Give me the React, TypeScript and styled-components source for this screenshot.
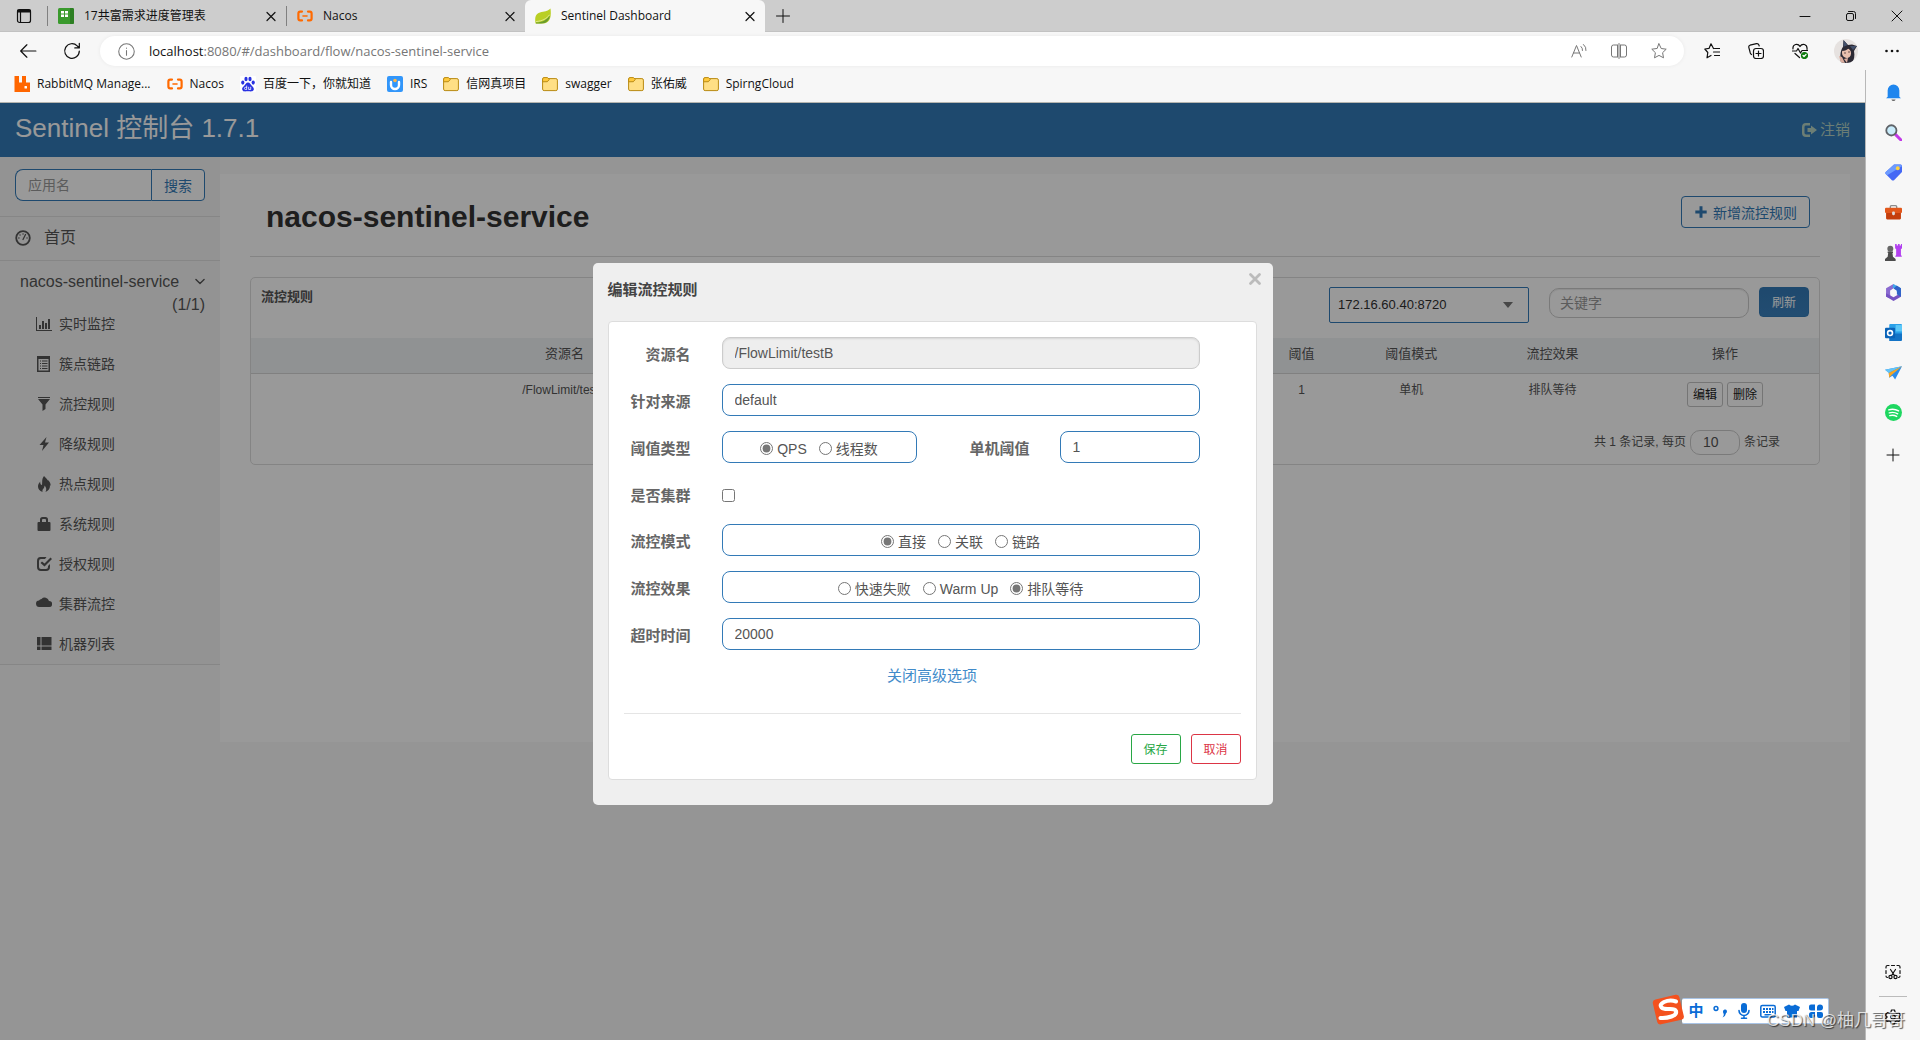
import React from "react";
import styled, { createGlobalStyle } from "styled-components";

const uiFont = '"Open Sans", "Noto Sans CJK SC", sans-serif';
const pageFont = '"Liberation Sans", "Noto Sans CJK SC", sans-serif';
const blue = "#337ab7";

const GlobalStyle = createGlobalStyle`
  *, *::before, *::after { box-sizing: border-box; }
  body { margin: 0; overflow: hidden; background: #f7f7f7; }
  button, input, select { font-family: inherit; margin: 0; }
  h1, h2, p { margin: 0; }
`;

/* ---------- browser frame ---------- */

const Browser = styled.div`
  position: relative;
  display: flex;
  flex-direction: column;
  height: 100vh;
  font: 12px/16px ${uiFont};
  color: #111;
  background: #f7f7f7;
`;

const TabBar = styled.header`
  display: flex;
  align-items: center;
  height: 32px;
  background: #cdcdcd;
  border-bottom: 1px solid #c2c2c2;
`;

const PlainButton = styled.button`
  display: flex;
  align-items: center;
  justify-content: center;
  flex: none;
  padding: 0;
  border: 0;
  background: none;
  color: inherit;
  font-size: inherit;
  line-height: inherit;
`;

const TabMenuButton = styled(PlainButton)`
  width: 47px;
  height: 32px;
`;

const Tab = styled.div<{ $active?: boolean }>`
  display: flex;
  align-items: center;
  gap: 10px;
  width: ${(p) => (p.$active ? "240px" : "238px")};
  height: 32px;
  padding: 0 7px 0 10px;
  border-radius: 6px 6px 0 0;
  background: ${(p) => (p.$active ? "#f7f7f7" : "transparent")};
`;

const TabTitle = styled.span`
  flex: 1;
  white-space: nowrap;
`;

const TabDivider = styled.span`
  width: 1px;
  height: 20px;
  background: #808080;
`;

const NewTabButton = styled(PlainButton)`
  width: 36px;
  height: 32px;
`;

const WindowControls = styled.div`
  display: flex;
  margin-left: auto;
`;

const WindowButton = styled(PlainButton)`
  width: 46px;
  height: 32px;
`;

const Toolbar = styled.div`
  display: flex;
  align-items: center;
  height: 38px;
  padding: 0 6px;
`;

const ToolButton = styled(PlainButton)`
  width: 44px;
  height: 30px;
`;

const Address = styled.div`
  display: flex;
  align-items: center;
  flex: 1;
  height: 30px;
  margin: 0 6px;
  padding: 0 5px 0 18px;
  border-radius: 15px;
  background: #fff;
  box-shadow: 0 0 4px rgba(0, 0, 0, 0.06);
`;

const AddressText = styled.span`
  flex: 1;
  margin-left: 14px;
  font-size: 13px;
  color: #767676;
  white-space: nowrap;
`;

const AddressHost = styled.span`
  color: #111;
`;

const AddressButton = styled(PlainButton)`
  width: 40px;
  height: 30px;
  color: #777;
`;

const ProfileButton = styled(ToolButton)`
  width: 48px;
`;

const Workspace = styled.div`
  display: flex;
  flex: 1;
  min-height: 0;
`;

const Viewport = styled.div`
  display: flex;
  flex-direction: column;
  flex: 1;
  min-width: 0;
`;

const Bookmarks = styled.nav`
  display: flex;
  align-items: center;
  gap: 16px;
  height: 33px;
  padding: 0 14px 4px;
  border-bottom: 1px solid #b5b5b0;
`;

const Bookmark = styled.a`
  display: flex;
  align-items: center;
  gap: 7px;
  color: #111;
  text-decoration: none;
  white-space: nowrap;
`;

const EdgeRail = styled.aside`
  display: flex;
  flex-direction: column;
  align-items: center;
  width: 55px;
  padding: 2px 0 3px;
  border-left: 1px solid #b8b8b8;
`;

const RailButton = styled(PlainButton)`
  width: 40px;
  height: 40px;
`;

const RailAddButton = styled(RailButton)`
  margin-top: 3px;
`;

const RailSpacer = styled.span`
  flex: 1;
`;

const RailRule = styled.span`
  width: 28px;
  height: 1px;
  margin-top: 4px;
  background: #bbb;
`;

/* ---------- dashboard page ---------- */

const Page = styled.div`
  position: relative;
  flex: 1;
  min-height: 0;
  overflow: hidden;
  font: 14px/20px ${pageFont};
  color: #555;
  background: #f8f8f8;
`;

const Masthead = styled.header`
  display: flex;
  align-items: center;
  justify-content: space-between;
  height: 54px;
  padding: 0 15px;
  background: ${blue};
`;

const Brand = styled.div`
  padding-bottom: 4px;
  font-size: 26px;
  line-height: 32px;
  color: #fff;
`;

const LogoutLink = styled.a`
  display: flex;
  align-items: center;
  gap: 3px;
  font-size: 15px;
  color: #b4d2c4;
  text-decoration: none;
`;

const Columns = styled.div`
  display: flex;
  align-items: flex-start;
`;

const SideMenu = styled.nav`
  width: 220px;
  flex: none;
  border-bottom: 1px solid #e0e0e0;
  background: #f6f6f6;
`;

const SearchRow = styled.form`
  display: flex;
  height: 60px;
  padding: 12px 15px 15px;
  border-bottom: 1px solid #e0e0e0;
`;

const SearchInput = styled.input`
  flex: 1;
  min-width: 0;
  height: 32px;
  padding: 0 12px;
  border: 1px solid ${blue};
  border-right: 0;
  border-radius: 8px 0 0 8px;
  background: #fff;
  font-size: 14px;
  color: #555;
  &::placeholder { color: #999; }
`;

const SearchButton = styled.button`
  width: 54px;
  height: 32px;
  padding: 0;
  border: 1px solid ${blue};
  border-radius: 0 4px 4px 0;
  background: #fff;
  font-size: 14px;
  color: ${blue};
`;

const HomeLink = styled.a`
  display: flex;
  align-items: center;
  gap: 13px;
  height: 44px;
  padding: 0 15px 2px;
  border-bottom: 1px solid #e0e0e0;
  font-size: 16px;
  color: #555;
  text-decoration: none;
`;

const AppEntry = styled.a`
  display: flex;
  flex-wrap: wrap;
  align-items: center;
  justify-content: space-between;
  padding: 9px 15px 0 20px;
  font-size: 16px;
  line-height: 23px;
  color: #555;
  text-decoration: none;
`;

const AppCount = styled.span`
  width: 100%;
  text-align: right;
`;

const MenuList = styled.ul`
  display: grid;
  gap: 24px;
  margin: 0;
  padding: 0 0 12px 36px;
  list-style: none;
`;

const MenuLink = styled.a`
  display: flex;
  align-items: center;
  gap: 7px;
  font-size: 14px;
  line-height: 16px;
  color: #555;
  text-decoration: none;
`;

const Content = styled.main`
  flex: 1;
  min-width: 0;
  min-height: 568px;
  margin: 17px 15px 0 0;
  padding: 0 30px;
  background: #fff;
`;

const ContentHead = styled.div`
  display: flex;
  align-items: flex-start;
  justify-content: space-between;
  height: 83px;
  padding: 22px 10px 0 16px;
  border-bottom: 1px solid #ddd;
`;

const Heading = styled.h1`
  font-size: 30px;
  line-height: 42px;
  color: #333;
`;

const AddRuleButton = styled.button`
  display: flex;
  align-items: center;
  gap: 5px;
  height: 32px;
  padding: 0 12px;
  border: 1px solid ${blue};
  border-radius: 4px;
  background: #fff;
  font-size: 14px;
  color: ${blue};
`;

const Card = styled.section`
  margin-top: 20px;
  border: 1px solid #ddd;
  border-radius: 5px;
`;

const CardHead = styled.div`
  display: flex;
  align-items: flex-start;
  height: 60px;
  padding: 9px 10px 0;
`;

const CardTitle = styled.h2`
  flex: 1;
  font-size: 13px;
  line-height: 20px;
  color: #555;
`;

const SelectWrap = styled.div`
  display: grid;
  align-items: center;
  justify-items: end;
  width: 200px;
  margin-right: 20px;
  > * { grid-area: 1 / 1; }
  > svg { margin-right: 16px; pointer-events: none; }
`;

const MachineSelect = styled.select`
  width: 100%;
  height: 36px;
  padding: 0 9px 2px 8px;
  border: 1px solid ${blue};
  border-radius: 2px;
  appearance: none;
  background: #fff;
  font-size: 13px;
  color: #303030;
`;

const KeywordInput = styled.input`
  width: 200px;
  height: 30px;
  margin: 1px 10px 0 0;
  padding: 0 10px;
  border: 1px solid #ccc;
  border-radius: 10px;
  background: #fff;
  box-shadow: inset 0 1px 1px rgba(0, 0, 0, 0.08);
  font-size: 14px;
  &::placeholder { color: #999; }
`;

const RefreshButton = styled.button`
  width: 50px;
  height: 30px;
  padding: 0 0 2px;
  border: 1px solid ${blue};
  border-radius: 4px;
  background: linear-gradient(#337ab7, #3a80bd);
  font-size: 12px;
  color: #fff;
`;

const RuleTable = styled.table`
  width: 100%;
  table-layout: fixed;
  border-collapse: collapse;
  text-align: center;
  th {
    height: 35px;
    padding: 0 0 2px;
    border-bottom: 1px solid #d5d5d5;
    background: #f1f3f5;
    font-size: 13px;
    font-weight: normal;
  }
  td {
    height: 49px;
    padding: 8px 0 0;
    vertical-align: top;
    font-size: 12px;
    line-height: 16px;
  }
`;

const Actions = styled.div`
  display: flex;
  justify-content: center;
  gap: 4px;
`;

const RowButton = styled.button`
  width: 36px;
  height: 25px;
  padding: 0 0 1px;
  border: 1px solid #c4c4c4;
  border-radius: 3px;
  background: #fff;
  font-size: 12px;
  color: #222;
`;

const Pager = styled.div`
  display: flex;
  align-items: center;
  justify-content: flex-end;
  gap: 4px;
  height: 42px;
  padding: 0 39px 2px 0;
  font-size: 12px;
`;

const PageSizeInput = styled.input`
  width: 50px;
  height: 25px;
  padding: 0 12px;
  border: 1px solid #ccc;
  border-radius: 10px;
  background: #fff;
  font-size: 14px;
  color: #555;
`;

/* ---------- rule dialog ---------- */

const Backdrop = styled.div`
  position: absolute;
  inset: 0;
  display: flex;
  align-items: flex-start;
  justify-content: center;
  padding-top: 160px;
  background: rgba(0, 0, 0, 0.4);
`;

const Dialog = styled.div`
  width: 680px;
  padding: 15px 16px 25px 15px;
  border-radius: 5px;
  background: #efefef;
`;

const DialogHead = styled.div`
  display: flex;
  align-items: flex-start;
  justify-content: space-between;
  height: 43px;
`;

const DialogTitle = styled.h2`
  font-size: 15px;
  line-height: 24px;
  color: #444;
`;

const CloseButton = styled(PlainButton)`
  width: 20px;
  height: 20px;
  margin: -9px -8px 0 0;
  color: #bbb;
`;

const FormCard = styled.form`
  padding: 15px;
  border: 1px solid #ddd;
  border-radius: 4px;
  background: #fff;
`;

const Fields = styled.div`
  display: grid;
  gap: 15px;
  padding-right: 41px;
`;

const Field = styled.div`
  display: grid;
  grid-template-columns: 67px 1fr;
  column-gap: 31px;
  align-items: center;
  min-height: 32px;
`;

const CheckField = styled(Field)`
  min-height: 31px;
`;

const SplitField = styled.div`
  display: grid;
  grid-template-columns: 195px 1fr 140px;
  column-gap: 30px;
  align-items: center;
`;

const FieldLabel = styled.label`
  padding-top: 4px;
  font-size: 15px;
  font-weight: bold;
  text-align: right;
  color: #666;
`;

const TextInput = styled.input`
  width: 100%;
  height: 32px;
  padding: 0 12px;
  border: 1px solid ${blue};
  border-radius: 8px;
  background: #fff;
  font-size: 14px;
  color: #555;
  &:disabled {
    border-color: #ccc;
    background: #eee;
    box-shadow: inset 0 1px 2px rgba(0, 0, 0, 0.1);
  }
`;

const RadioBox = styled.div`
  display: flex;
  align-items: center;
  justify-content: center;
  gap: 12px;
  height: 32px;
  padding-top: 3px;
  border: 1px solid ${blue};
  border-radius: 8px;
`;

const RadioLabel = styled.label`
  display: flex;
  align-items: center;
  gap: 4px;
  color: #555;
`;

const RadioInput = styled.input`
  width: 13px;
  height: 13px;
  accent-color: #767676;
`;

const CheckInput = styled.input`
  && { margin-top: 4px; }
  width: 13px;
  height: 13px;
`;

const AdvancedRow = styled.div`
  display: flex;
  justify-content: center;
  height: 64px;
  padding-top: 16px;
  border-bottom: 1px solid #e5e5e5;
`;

const AdvancedLink = styled.a`
  font-size: 15px;
  color: #428bca;
  text-decoration: none;
`;

const DialogActions = styled.div`
  display: flex;
  justify-content: flex-end;
  gap: 10px;
  padding-top: 20px;
`;

const OutlineButton = styled.button<{ $color: string }>`
  width: 50px;
  height: 30px;
  padding: 0 0 2px;
  border: 1px solid ${(p) => p.$color};
  border-radius: 3px;
  background: #fff;
  font-size: 12px;
  color: ${(p) => p.$color};
`;

/* ---------- floating layers ---------- */

const ImeBar = styled.div`
  position: absolute;
  right: 91px;
  bottom: 16px;
  display: flex;
  align-items: center;
  height: 30px;
`;

const ImeKeys = styled.div`
  display: flex;
  align-items: center;
  height: 26px;
  margin: 4px 0 0 -3px;
  padding-left: 2px;
  border: 1px solid #a9c4e6;
  border-left: 0;
  border-radius: 2px;
  background: #fff;
`;

const ImeKey = styled(PlainButton)`
  width: 24px;
  height: 24px;
  font: bold 15px/20px ${pageFont};
  color: #0a6cd6;
`;

const ImeLogo = styled.svg`
  position: relative;
  z-index: 1;
`;

const Watermark = styled.div`
  position: absolute;
  right: 15px;
  bottom: 7px;
  font: 17px/24px ${pageFont};
  color: rgba(255, 255, 255, 0.75);
  text-shadow: 1px 1px 1px rgba(0, 0, 0, 0.65);
  white-space: nowrap;
`;

/* ---------- drawings ---------- */

type DrawProps = { size?: number; box?: number; stroke?: boolean; width?: number; children: React.ReactNode };

function Draw({ size = 16, box = 16, stroke, width = 1, children }: DrawProps) {
  return (
    <svg
      width={size}
      height={size}
      viewBox={`0 0 ${box} ${box}`}
      fill={stroke ? "none" : "currentColor"}
      stroke={stroke ? "currentColor" : "none"}
      strokeWidth={width}
      strokeLinecap="round"
      strokeLinejoin="round"
      aria-hidden="true"
    >
      {children}
    </svg>
  );
}

const CloseGlyph = () => (
  <Draw size={16} stroke width={1.2}><path d="M4 4.5l8 8M12 4.5l-8 8" /></Draw>
);

const NacosGlyph = () => (
  <Draw stroke width={2.2}>
    <g stroke="#ff6a00"><path d="M5 3.600H3.200Q1.400 3.600 1.400 5.400v5.200q0 1.800 1.800 1.800H5M11 3.600h1.800q1.800 0 1.800 1.800v5.200q0 1.800-1.800 1.800H11" /><path d="M6 8h4" strokeWidth="1.6" /></g>
  </Draw>
);

const SheetGlyph = () => (
  <Draw size={16}>
    <rect width="16" height="16" rx="1.5" fill="#3a9a2d" />
    <path d="M12 0h2.500A1.500 1.500 0 0 1 16 1.500v13a1.500 1.500 0 0 1-1.500 1.500H12z" fill="#2d7f23" />
    <rect x="3" y="3" width="7" height="6" fill="#fff" />
    <path d="M6.500 3v6M3 6h7" stroke="#3a9a2d" />
  </Draw>
);

const LeafGlyph = () => (
  <Draw>
    <path d="M.5 15.500C-1 6 3 4.500 8 3.800 12 3.200 14 2 15.500 .5 16.500 8 15.500 15 8 15.500z" fill="#b9cf24" />
    <path d="M1 14.500c6 0 11-2.500 14-7.500-.5 5-3.500 8.500-9 8.500H1z" fill="#6a9c2d" />
    <path d="M1.500 13.500C7 13 11.500 11 14.500 7" stroke="#e9f0a8" strokeWidth=".8" fill="none" />
  </Draw>
);

const RabbitGlyph = () => (
  <Draw>
    <path d="M.5 0h4.500v6.500h3V0h4v6.500H16V16H.5z" fill="#f60" />
    <rect x="10.500" y="10" width="2.500" height="2.500" rx=".5" fill="#fff" />
  </Draw>
);

const BaiduGlyph = () => (
  <Draw>
    <rect width="16" height="16" rx="1" fill="#fff" />
    <g fill="#2932e1">
      <ellipse cx="2.800" cy="6.600" rx="1.600" ry="2.100" /><ellipse cx="6" cy="3" rx="1.600" ry="2.300" />
      <ellipse cx="10" cy="3" rx="1.600" ry="2.300" /><ellipse cx="13.200" cy="6.600" rx="1.600" ry="2.100" />
      <path d="M8 6.500c2 0 2.500 2 4 3.500s2.500 2.800 1.500 4.300-3 1-5.500 1-4.500.7-5.500-1S2.500 11.500 4 10s2-3.500 4-3.500z" />
    </g>
    <path d="M6.700 10v3.500H5.500a1 1 0 0 1 0-2.200h1.200M8.700 11.200v2.300h2v-2.300" stroke="#fff" strokeWidth=".8" fill="none" />
  </Draw>
);

const IrsGlyph = () => (
  <Draw>
    <rect width="16" height="16" rx="2" fill="#3296fa" />
    <path d="M4 6v3a4 4 0 0 0 8 0V6" stroke="#fff" strokeWidth="2.400" fill="none" />
    <circle cx="8" cy="4.500" r="1.800" fill="#ffb648" />
  </Draw>
);

const FolderGlyph = () => (
  <Draw>
    <rect x=".6" y="2.600" width="14.800" height="12" rx="1.500" fill="#ffdf85" stroke="#b98a12" />
    <path d="M.6 5.400V3q0-1.400 1.400-1.400h3.400L7.300 3.400 5.600 5.400z" fill="#ffc93c" stroke="#b98a12" />
  </Draw>
);

const StarPath = "M8 .8l2.200 4.700 5 .7-3.600 3.500.9 5.100L8 12.400l-4.500 2.400.9-5.100L.8 6.200l5-.7z";

const Avatar = () => (
  <svg width="24" height="24" viewBox="0 0 24 24" aria-hidden="true">
    <defs><clipPath id="face"><circle cx="12" cy="12" r="12" /></clipPath></defs>
    <g clipPath="url(#face)">
      <rect width="24" height="24" fill="#e6e2e0" />
      <path d="M7 24C6 17 6 12 9 8L9.500 1l4.500 5 4-.5L23 7l-3 5c1 5 0 9-2 12z" fill="#2c2a35" />
      <path d="M9.500 1l4 5-4 2zM23 7l-4 4-3-4z" fill="#43506b" />
      <ellipse cx="12.500" cy="14" rx="4.500" ry="5" fill="#e9bfae" transform="rotate(-18 12.500 14)" />
      <path d="M8 12c3 0 5-1 7-3 1 1 2 2 3 2l-3-4-6 1z" fill="#2c2a35" />
      <path d="M5 17l3 1 3 6H7zM10 20l4-1-1 5z" fill="#dcae9f" />
      <circle cx="11" cy="14" r=".7" fill="#3a2b2b" /><circle cx="15" cy="13" r=".7" fill="#3a2b2b" />
    </g>
  </svg>
);

const menuItems: { label: string; icon: React.ReactNode }[] = [
  { label: "实时监控", icon: <path d="M0 1h1v13h15v1H0zM3 9h2v4H3zM6 5h2v8H6zM9 7h2v6H9zM12 3h2v10h-2z" /> },
  { label: "簇点链路", icon: <path fillRule="evenodd" d="M1 0h13v16H1zM2.500 3v11.500h10V3zM4 4.500h1v1H4zM6 4.500h5.500v1H6zM4 7h1v1H4zM6 7h5.500v1H6zM4 9.500h1v1H4zM6 9.500h5.500v1H6zM4 12h1v1H4zM6 12h5.500v1H6z" /> },
  { label: "流控规则", icon: <path d="M2 1h12v1H2zM2 3h12L9.500 8.500V13l-3 2V8.500z" /> },
  { label: "降级规则", icon: <path d="M10.500 1L3.500 9h4L6 15l7-8.500H9z" /> },
  { label: "热点规则", icon: <path d="M8 0c4 4 6 6.500 6 10 0 3-2 5-4.500 6 1.500-3 .5-5-1-6.500 0 3.500-2.500 3-2 6.500C3.500 15 2 13 2 10.500c0-2 1-3.500 2.200-5C4 8 5 9 6 9c.500-3-.5-6 2-9zM12 4c2 2 3 4 2.500 6L12 6z" /> },
  { label: "系统规则", icon: <path fillRule="evenodd" d="M4 6V3.500A2.500 2.500 0 0 1 6.500 1h3A2.500 2.500 0 0 1 12 3.500V6h1.500q1 0 1 1v7q0 1-1 1h-11q-1 0-1-1V7q0-1 1-1zM6 6h4V4q0-1-1-1H7Q6 3 6 4z" /> },
  { label: "授权规则", icon: <path d="M4.500 1h6l-1.500 2H5q-2 0-2 2v6q0 2 2 2h5q2 0 2-2v-1l2-2v3q0 4-4 4H5q-4 0-4-4V5q0-4 3.500-4zM14.500 1.500L16 3l-7.500 7.500L4.500 7 6 5.500l2.500 2z" /> },
  { label: "集群流控", icon: <path d="M3.500 11A3.200 3.200 0 0 1 3 4.600 3 3 0 0 1 5.500 3a4.400 4.400 0 0 1 7.500 2h.300A3 3 0 0 1 13 11z" /> },
  { label: "机器列表", icon: <path d="M1 1h3.500v8.500H1zM5.500 1H15.500v8.500H5.500zM1 10.500h3.500V14H1zM5.500 10.500H15.500V14H5.500z" /> },
];

const bookmarks: { label: string; icon: React.ReactNode }[] = [
  { label: "RabbitMQ Manage...", icon: <RabbitGlyph /> },
  { label: "Nacos", icon: <NacosGlyph /> },
  { label: "百度一下，你就知道", icon: <BaiduGlyph /> },
  { label: "IRS", icon: <IrsGlyph /> },
  { label: "信网真项目", icon: <FolderGlyph /> },
  { label: "swagger", icon: <FolderGlyph /> },
  { label: "张佑威", icon: <FolderGlyph /> },
  { label: "SpirngCloud", icon: <FolderGlyph /> },
];

const railItems: { name: string; icon: React.ReactNode }[] = [
  { name: "通知", icon: <><path d="M2.500 12V6a5.500 5.500 0 0 1 11 0v6L15 13.500H1z" fill="#1f86ee" /><path d="M6 14.500h4q-.5 1.500-2 1.500t-2-1.500z" fill="#666" /></> },
  { name: "搜索", icon: <><path d="M10 10l5 5" stroke="#c239e8" strokeWidth="2.800" strokeLinecap="round" /><circle cx="6" cy="6" r="4.800" fill="#c9ecfb" stroke="#5f6368" strokeWidth="1.700" /></> },
  { name: "购物", icon: <><path d="M8.500.5h6q1.500 0 1.500 1.500v5.500L8.500 15.200q-1 .8-2 0L.7 9.500q-.8-1 0-2z" fill="#4468f5" /><path d="M8.500.5h6q1.500 0 1.500 1.500L2 10.500.7 9.500q-.8-1 0-2z" fill="#6d9bff" /><circle cx="12" cy="4" r="1.800" fill="#ffd23f" /></> },
  { name: "工具", icon: <><path d="M5 4V2.500Q5 1.500 6 1.500h4q1 0 1 1V4" fill="none" stroke="#8b8b8b" strokeWidth="1.300" /><rect x="1" y="7" width="14" height="7.500" rx="1" fill="#c43e0c" /><rect y="3.500" width="16" height="5" rx="1" fill="#e2571b" /><rect x="6.700" y="7" width="2.600" height="3.500" rx="1" fill="#ddd" /></> },
  { name: "游戏", icon: <><path d="M9.500 0h1.500v1.500h1.200V0h1.600v1.500H15V0h1v4l-1 1v5l1 2H9.500l1-2V5l-1-1z" fill="#b340f0" /><circle cx="5" cy="4.500" r="2.800" fill="#666" /><path d="M2.500 7h5v1.500H7L7.500 12l2.500 2v2H0v-2l2.500-2L3 8.500h-.5z" fill="#4c4c4c" /></> },
  { name: "Microsoft 365", icon: <><path d="M8 0L1 4v8l4 1.500V6l5-3.500z" fill="#8a6ad0" /><path d="M8 0l7 4v6.500L10.500 7V5L7 3z" fill="#3fa9ea" /><path d="M1 11.800L8 16l7-4V8.500l-7 4-3-1.700-4-2z" fill="#7552c2" /><path d="M15 4v8l-4-2.300V6L8 4.500l3-3z" fill="#2f62c8" /><path d="M8 4.700l3 1.700v3.300L8 11.400 5 9.700V6.400z" fill="#f7f7f7" /></> },
  { name: "Outlook", icon: <><rect x="4" width="12" height="14" rx="1" fill="#2aa0e8" /><path d="M4 9h12v6q0 1-1 1H4z" fill="#1373c6" /><path d="M10 1h6v6h-6z" fill="#5cc8f8" /><rect y="3.500" width="9.500" height="10" rx="1" fill="#0a63b8" /><circle cx="4.750" cy="8.500" r="2.300" fill="none" stroke="#fff" strokeWidth="1.500" /></> },
  { name: "Drop", icon: <><path d="M0 5.500L16 2 9.500 14.500 7 11l-3 2-.5-5z" fill="#2a8cec" /><path d="M0 5.500L16 2 3.500 8.500z" fill="#63c4f8" /><path d="M3.500 8.500L16 2 6.500 10 4 13z" fill="#f5a623" /></> },
  { name: "Spotify", icon: <><circle cx="8" cy="8" r="8" fill="#1ed760" /><path d="M3.500 5.500q5-1.500 9.300 1M4 8.300q4.300-1.200 8 .9M4.500 10.900q3.500-.9 6.500.8" fill="none" stroke="#fff" strokeWidth="1.300" strokeLinecap="round" /></> },
];

function Radios({ name, label, options, checked }: { name: string; label: string; options: string[]; checked: string }) {
  return (
    <RadioBox role="radiogroup" aria-label={label}>
      {options.map((option) => (
        <RadioLabel key={option}>
          <RadioInput type="radio" name={name} defaultChecked={option === checked} />
          {option}
        </RadioLabel>
      ))}
    </RadioBox>
  );
}

function BrowserTop() {
  return (
    <>
      <TabBar>
        <TabMenuButton aria-label="标签页操作">
          <Draw stroke width={1.200}><rect x="1.500" y="1.500" width="13" height="13" rx="2" /><path d="M2 3.500h12M2 2.500h12" strokeWidth="2" /><path d="M4.500 4v10.500" /></Draw>
        </TabMenuButton>
        <TabDivider />
        <Tab>
          <SheetGlyph />
          <TabTitle>17共富需求进度管理表</TabTitle>
          <PlainButton aria-label="关闭标签页"><CloseGlyph /></PlainButton>
        </Tab>
        <TabDivider />
        <Tab>
          <NacosGlyph />
          <TabTitle>Nacos</TabTitle>
          <PlainButton aria-label="关闭标签页"><CloseGlyph /></PlainButton>
        </Tab>
        <Tab $active>
          <LeafGlyph />
          <TabTitle>Sentinel Dashboard</TabTitle>
          <PlainButton aria-label="关闭标签页"><CloseGlyph /></PlainButton>
        </Tab>
        <NewTabButton aria-label="新建标签页"><Draw stroke><path d="M8 1.500v13M1.500 8h13" /></Draw></NewTabButton>
        <WindowControls>
          <WindowButton aria-label="最小化"><Draw stroke><path d="M3 8.500h10" /></Draw></WindowButton>
          <WindowButton aria-label="还原"><Draw stroke><rect x="3.500" y="5.500" width="7" height="7" rx="1.500" /><path d="M5.500 3.500h5q2 0 2 2v5" /></Draw></WindowButton>
          <WindowButton aria-label="关闭"><Draw stroke><path d="M3 3l10 10M13 3L3 13" /></Draw></WindowButton>
        </WindowControls>
      </TabBar>
      <Toolbar>
        <ToolButton aria-label="后退"><Draw size={18} stroke width={1.100}><path d="M15 8H1.500M7 2.500L1.500 8 7 13.500" /></Draw></ToolButton>
        <ToolButton aria-label="刷新"><Draw size={18} stroke width={1.100}><path d="M14.500 8A6.500 6.500 0 1 1 12.600 3.400L14.500 5.300M14.500 1.300v4h-4" /></Draw></ToolButton>
        <Address>
          <Draw size={17} stroke><g stroke="#777"><circle cx="8" cy="8" r="7.300" /><path d="M8 7.200v4.300M8 4.700v.2" /></g></Draw>
          <AddressText><AddressHost>localhost</AddressHost>:8080/#/dashboard/flow/nacos-sentinel-service</AddressText>
          <AddressButton aria-label="朗读"><Draw stroke><path d="M.8 14L5.500 2.500 10.200 14M2.500 10h6M10 3.500q1.800 1.500 1.500 4M12.500 1.500q3 2.500 2.500 6" /></Draw></AddressButton>
          <AddressButton aria-label="分屏"><Draw stroke><path d="M6 2H2.500Q.5 2 .5 4v8q0 2 2 2H6M10 2h3.500q2 0 2 2v8q0 2-2 2H10M6.500 2v12M9.500 2v12M8 .5v15" /></Draw></AddressButton>
          <AddressButton aria-label="收藏此页"><Draw stroke><path d={StarPath} /></Draw></AddressButton>
        </Address>
        <ToolButton aria-label="收藏夹"><Draw stroke width={1.200}><path d="M9.500 5.500L7 .8 5 5.400.8 6l3 3.500L3 14.800l4-2.300M10.500 5.500H16M9.500 9H16M10.500 12.500H16" /></Draw></ToolButton>
        <ToolButton aria-label="集锦"><Draw stroke width={1.200}><rect x="5.500" y="5.500" width="10" height="10" rx="2.500" /><path d="M10.500 8v5M8 10.500h5M3.500 11.500Q2.600 11 2.300 10L.8 4.300Q.5 2.700 2 2.200L8.500.7q1.800-.3 2.500 1.500l.2.800" /></Draw></ToolButton>
        <ToolButton aria-label="浏览器概要"><Draw stroke width={1.200}><path d="M1 6Q.5 2.500 3.500 1.500 6.500.8 8 3.500 9.500.8 12.500 1.500 15.500 2.500 15 6.500M.5 8h4l1.500-2.500L8.500 10 10 7.500h5.500M3 10.500L7.500 14.500" /><circle cx="12.500" cy="12.500" r="3" fill="#107c10" stroke="#107c10" /><path d="M11 12.500l1 1 2-2" stroke="#fff" /></Draw></ToolButton>
        <ProfileButton aria-label="个人资料"><Avatar /></ProfileButton>
        <ToolButton aria-label="更多"><Draw><circle cx="2.500" cy="8" r="1.300" /><circle cx="8" cy="8" r="1.300" /><circle cx="13.500" cy="8" r="1.300" /></Draw></ToolButton>
      </Toolbar>
    </>
  );
}

function Sidebar() {
  return (
    <SideMenu>
      <SearchRow>
        <SearchInput aria-label="应用名" placeholder="应用名" />
        <SearchButton type="button">搜索</SearchButton>
      </SearchRow>
      <HomeLink href="#home">
        <Draw stroke width={1.800}><circle cx="8" cy="8" r="6.800" /><path d="M8 9.500L10.500 4.500M3.800 8h.2M5 5h.1M8 4h.1M12 8h.1" strokeWidth="1.300" /></Draw>
        首页
      </HomeLink>
      <AppEntry href="#app">
        nacos-sentinel-service
        <Draw size={10} stroke width={2.200}><path d="M1.500 4L8 10.500 14.500 4" /></Draw>
        <AppCount>(1/1)</AppCount>
      </AppEntry>
      <MenuList>
        {menuItems.map((item, i) => (
          <li key={item.label}>
            <MenuLink href={`#menu-${i}`}><Draw>{item.icon}</Draw>{item.label}</MenuLink>
          </li>
        ))}
      </MenuList>
    </SideMenu>
  );
}

function FlowRules() {
  return (
    <Content>
      <ContentHead>
        <Heading>nacos-sentinel-service</Heading>
        <AddRuleButton>
          <Draw size={14}><path d="M6.300 1.500h3.400v4.800h4.800v3.400H9.700v4.800H6.300V9.700H1.500V6.300h4.800z" /></Draw>
          新增流控规则
        </AddRuleButton>
      </ContentHead>
      <Card>
        <CardHead>
          <CardTitle>流控规则</CardTitle>
          <SelectWrap>
            <MachineSelect aria-label="机器"><option>172.16.60.40:8720</option></MachineSelect>
            <svg width="10" height="6" viewBox="0 0 10 6" aria-hidden="true"><path d="M0 0h10L5 6z" fill="#777" /></svg>
          </SelectWrap>
          <KeywordInput aria-label="关键字" placeholder="关键字" />
          <RefreshButton>刷新</RefreshButton>
        </CardHead>
        <RuleTable>
          <colgroup>
            <col width="40%" /><col width="24%" /><col width="6%" /><col width="8%" /><col width="10%" /><col width="12%" />
          </colgroup>
          <thead>
            <tr><th>资源名</th><th /><th>阈值</th><th>阈值模式</th><th>流控效果</th><th>操作</th></tr>
          </thead>
          <tbody>
            <tr>
              <td>/FlowLimit/testB</td><td /><td>1</td><td>单机</td><td>排队等待</td>
              <td><Actions><RowButton>编辑</RowButton><RowButton>删除</RowButton></Actions></td>
            </tr>
          </tbody>
        </RuleTable>
        <Pager>
          <span>共 1 条记录, 每页</span>
          <PageSizeInput aria-label="每页记录数" defaultValue="10" />
          <span>条记录</span>
        </Pager>
      </Card>
    </Content>
  );
}

function RuleDialog() {
  return (
    <Backdrop>
      <Dialog role="dialog" aria-labelledby="dialog-title">
        <DialogHead>
          <DialogTitle id="dialog-title">编辑流控规则</DialogTitle>
          <CloseButton aria-label="关闭"><Draw stroke width={2.800}><path d="M3.500 3.500l9 9M12.500 3.500l-9 9" /></Draw></CloseButton>
        </DialogHead>
        <FormCard>
          <Fields>
            <Field>
              <FieldLabel htmlFor="resource">资源名</FieldLabel>
              <TextInput id="resource" defaultValue="/FlowLimit/testB" disabled />
            </Field>
            <Field>
              <FieldLabel htmlFor="origin">针对来源</FieldLabel>
              <TextInput id="origin" defaultValue="default" />
            </Field>
            <Field>
              <FieldLabel as="span">阈值类型</FieldLabel>
              <SplitField>
                <Radios name="grade" label="阈值类型" options={["QPS", "线程数"]} checked="QPS" />
                <FieldLabel htmlFor="count">单机阈值</FieldLabel>
                <TextInput id="count" defaultValue="1" />
              </SplitField>
            </Field>
            <CheckField>
              <FieldLabel htmlFor="cluster">是否集群</FieldLabel>
              <CheckInput id="cluster" type="checkbox" />
            </CheckField>
            <Field>
              <FieldLabel as="span">流控模式</FieldLabel>
              <Radios name="strategy" label="流控模式" options={["直接", "关联", "链路"]} checked="直接" />
            </Field>
            <Field>
              <FieldLabel as="span">流控效果</FieldLabel>
              <Radios name="behavior" label="流控效果" options={["快速失败", "Warm Up", "排队等待"]} checked="排队等待" />
            </Field>
            <Field>
              <FieldLabel htmlFor="timeout">超时时间</FieldLabel>
              <TextInput id="timeout" defaultValue="20000" />
            </Field>
          </Fields>
          <AdvancedRow><AdvancedLink href="#advanced">关闭高级选项</AdvancedLink></AdvancedRow>
          <DialogActions>
            <OutlineButton type="button" $color="#28a745">保存</OutlineButton>
            <OutlineButton type="button" $color="#dc3545">取消</OutlineButton>
          </DialogActions>
        </FormCard>
      </Dialog>
    </Backdrop>
  );
}

function InputMethodBar() {
  return (
    <ImeBar>
      <ImeLogo width="33" height="31" viewBox="0 0 33 31" aria-hidden="true">
        <path d="M3.500 5.500L23.500.8q3-.6 3.800 2.200l4.500 19q.6 3-2.300 3.800L9 30.300q-3 .6-3.800-2.300L.8 9.200q-.4-3 2.700-3.700z" fill="#f4511e" />
        <path d="M24 7.500q-6-2-12 .5-5 2.500-2.500 5.500 2 1.800 7.500 1.500 6-.3 7 2 1 3.500-4.500 5.500T8.500 24" fill="none" stroke="#fff" strokeWidth="4" strokeLinecap="round" />
      </ImeLogo>
      <ImeKeys>
        <ImeKey aria-label="中文">中</ImeKey>
        <ImeKey aria-label="标点"><Draw><circle cx="4" cy="5.500" r="1.900" fill="none" stroke="currentColor" strokeWidth="1.500" /><path d="M11 8.500a2 2 0 1 1 3 1.700q-.3 3-3.500 4.300 1.500-2 1.300-3.600-.8-.8-.8-2.400z" /></Draw></ImeKey>
        <ImeKey aria-label="语音"><Draw><rect x="5" width="6" height="10" rx="3" /><path d="M3 7.500a5 5 0 0 0 10 0M8 12.500V15M5.500 15.200h5" fill="none" stroke="currentColor" strokeWidth="1.600" /></Draw></ImeKey>
        <ImeKey aria-label="键盘"><Draw><rect x=".8" y="2.500" width="14.400" height="11.500" rx="1.500" fill="none" stroke="currentColor" strokeWidth="1.500" /><path d="M3 5h2v2H3zM6 5h2v2H6zM9 5h2v2H9zM12 5h1.500v2H12zM3 8h2v2H3zM6 8h2v2H6zM9 8h2v2H9zM12 8h1.500v2H12zM4.500 11h7v1.500h-7z" /></Draw></ImeKey>
        <ImeKey aria-label="皮肤"><Draw><path d="M5 1.500q3 2.500 6 0l5 2.500-1.500 4H13v6.500H3V8H1.500L0 4z" /></Draw></ImeKey>
        <ImeKey aria-label="工具箱"><Draw><path d="M1 3.500Q1 1.500 3 1.500h4v6H3q-2 0-2-2zM9 4.500a3 3 0 1 1 6 0q0 3-3 3H9zM1 11.500Q1 9 3.500 9H7v4q0 2-2.500 2H3q-2 0-2-2zM9 9h4q2 0 2 2v2q0 2-2 2h-2q-2 0-2-2z" /></Draw></ImeKey>
      </ImeKeys>
    </ImeBar>
  );
}

export default function App() {
  return (
    <Browser>
      <GlobalStyle />
      <BrowserTop />
      <Workspace>
        <Viewport>
          <Bookmarks>
            {bookmarks.map((b) => (
              <Bookmark key={b.label} href="#bookmark">{b.icon}{b.label}</Bookmark>
            ))}
          </Bookmarks>
          <Page>
            <Masthead>
              <Brand>Sentinel 控制台 1.7.1</Brand>
              <LogoutLink href="#logout">
                <Draw><path d="M9 1v2.600H5Q3.500 3.600 3.500 5v6q0 1.400 1.500 1.400h4V15H5q-4 0-4-4V5q0-4 4-4zM10 3.500l6 4.500-6 4.500V10H6.500V6H10z" /></Draw>
                注销
              </LogoutLink>
            </Masthead>
            <Columns>
              <Sidebar />
              <FlowRules />
            </Columns>
            <RuleDialog />
          </Page>
        </Viewport>
        <EdgeRail>
          {railItems.map((item) => (
            <RailButton key={item.name} aria-label={item.name}><Draw size={17}>{item.icon}</Draw></RailButton>
          ))}
          <RailAddButton aria-label="添加"><Draw stroke><path d="M8 2v12M2 8h12" /></Draw></RailAddButton>
          <RailSpacer />
          <RailButton aria-label="网页捕获"><Draw stroke width={1.200}><path d="M1 4V3q0-1.500 1.500-1.500H4M6.500 1.500h3M12 1.500h1.500Q15 1.500 15 3v1M1 6.500v3M15 6.500v3M1 12q0 1.500 1.500 1.500M15 12q0 1.500-1.500 1.500M5.500 5.500l4 6M10.500 5.500l-4 6" /><circle cx="5.500" cy="13" r="1.600" /><circle cx="10.500" cy="13" r="1.600" /></Draw></RailButton>
          <RailRule />
          <RailButton aria-label="设置"><Draw stroke width={1.200}><circle cx="8" cy="8" r="2.200" /><path d="M6.500 1h3l.6 2.200 1.700 1 2.200-.6 1.500 2.600L13.900 8l1.600 1.800-1.500 2.600-2.200-.6-1.700 1L9.500 15h-3l-.6-2.200-1.700-1-2.200.6L.5 9.800 2.100 8 .5 6.200 2 3.600l2.200.6 1.700-1z" /></Draw></RailButton>
        </EdgeRail>
      </Workspace>
      <InputMethodBar />
      <Watermark>CSDN @柚几哥哥</Watermark>
    </Browser>
  );
}
